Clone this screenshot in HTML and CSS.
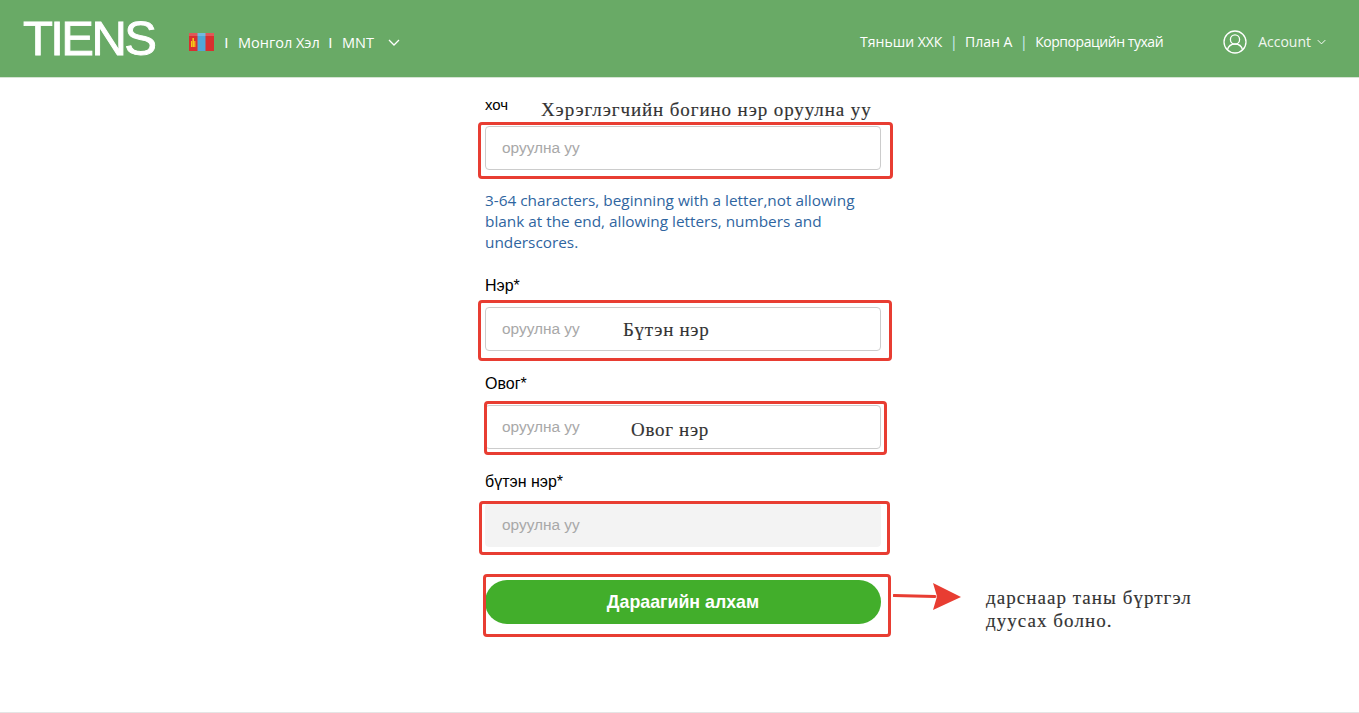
FILE: index.html
```html
<!DOCTYPE html>
<html lang="mn">
<head>
  <meta charset="UTF-8" />
  <meta name="viewport" content="width=device-width, initial-scale=1.0" />
  <title>TIENS</title>
  <link rel="stylesheet" href="styles.css">
</head>
<body>
  <header class="topbar">
    <div class="topbar-left">
      <a class="logo">TIENS</a>
      <svg class="flag" viewBox="0 0 25 18" aria-hidden="true">
        <rect width="25" height="18" fill="#d92f2f"/>
        <rect x="8.5" width="8" height="18" fill="#4fa8d8"/>
        <rect width="25" height="3" fill="#fff" opacity=".2"/>
        <rect x="2" y="8" width="1.2" height="6" fill="#f5c518"/>
        <rect x="5.2" y="8" width="1.2" height="6" fill="#f5c518"/>
        <rect x="3.400" y="5" width="1.6" height="9" fill="#f5c518"/>
      </svg>
      <div class="locale">
        <span class="bar">I</span>
        <span>Монгол Хэл</span>
        <span class="bar">I</span>
        <span>MNT</span>
        <svg class="chevron" viewBox="0 0 12 7" aria-hidden="true"><path d="M1 1l5 5 5-5"/></svg>
      </div>
    </div>
    <div class="topbar-right">
      <nav class="links">
        <a>Тяньши ХХК</a>
        <span class="pipe">|</span>
        <a>План А</a>
        <span class="pipe">|</span>
        <a class="tight">Корпорацийн тухай</a>
      </nav>
      <div class="account">
        <svg class="user" viewBox="0 0 24 24" aria-hidden="true">
          <circle cx="12" cy="12" r="11"/>
          <circle cx="12" cy="9.5" r="4.6"/>
          <path d="M4.4 20c1-4 4-6 7.6-6s6.600 2 7.600 6"/>
        </svg>
        <span>Account</span>
        <svg class="chevron small" viewBox="0 0 12 7" aria-hidden="true"><path d="M1 1l5 5 5-5"/></svg>
      </div>
    </div>
  </header>

  <main class="form">
    <label class="field-label first" for="nick">хоч</label>
    <input class="text-input" id="nick" type="text" placeholder="оруулна уу">
    <p class="hint">3-64 characters, beginning with a letter,not allowing blank at the end, allowing letters, numbers and underscores.</p>

    <label class="field-label after-hint" for="first">Нэр*</label>
    <input class="text-input" id="first" type="text" placeholder="оруулна уу">

    <label class="field-label" for="last">Овог*</label>
    <input class="text-input" id="last" type="text" placeholder="оруулна уу">

    <label class="field-label" for="full">бүтэн нэр*</label>
    <input class="text-input locked" id="full" type="text" placeholder="оруулна уу" disabled>

    <button class="next-btn" type="button">Дараагийн алхам</button>
  </main>

  <footer class="footer-line"></footer>

  <!-- annotations drawn over the page -->
  <div class="mark mark-nick"></div>
  <div class="mark mark-first"></div>
  <div class="mark mark-last"></div>
  <div class="mark mark-full"></div>
  <div class="mark mark-btn"></div>

  <span class="note note-nick">Хэрэглэгчийн богино нэр оруулна уу</span>
  <span class="note note-first">Бүтэн нэр</span>
  <span class="note note-last">Овог нэр</span>
  <span class="note note-done">дарснаар таны бүртгэл<br>дуусах болно.</span>

  <svg class="arrow" viewBox="0 0 70 30" aria-hidden="true">
    <path d="M1 13.500L42 14.500" stroke="#e83d32" stroke-width="3" stroke-linecap="round"/>
    <path d="M40 1L68 15L40 28L44 14.500Z" fill="#e83d32"/>
  </svg>
</body>
</html>
```

FILE: styles.css
```css
* {
  margin: 0;
  padding: 0;
  box-sizing: border-box;
}

html, body {
  height: 713px;
  overflow: hidden;
}

body {
  position: relative;
  background: #fff;
  font-family: "Liberation Sans", sans-serif;
  color: #000;
}

.topbar {
  display: flex;
  justify-content: space-between;
  align-items: center;
  height: 78px;
  padding: 0 33px 0 23px;
  background: #69aa66;
  border-bottom: 1px solid #d5e4d3;
  color: #fff;
  font-family: "Open Sans", sans-serif;
  font-size: 14px;
}

.topbar-left, .topbar-right, .locale, .links, .account {
  display: flex;
  align-items: center;
}

.topbar-right {
  margin-top: 6px;
}

.logo {
  font-family: "Liberation Sans", sans-serif;
  font-size: 49px;
  line-height: 49px;
  letter-spacing: -2.6px;
  -webkit-text-stroke: 0.9px #fff;
}

.flag {
  width: 25px;
  height: 18px;
  margin-left: 35px;
  margin-top: 7px;
  filter: blur(0.4px);
}

.locale {
  margin-left: 10px;
  margin-top: 7px;
  gap: 8.5px;
  font-size: 14.5px;
}

.bar {
  color: #fff;
  padding-right: 1px;
  font-family: "Liberation Sans", sans-serif;
  font-size: 15px;
}

.chevron {
  width: 12px;
  height: 7px;
  margin-left: 6px;
  fill: none;
  stroke: #fff;
  stroke-width: 1.3;
}

.chevron.small {
  width: 9px;
  height: 6px;
  margin-left: 6px;
}

.links {
  gap: 7.5px;
}

.tight {
  letter-spacing: -0.45px;
}

.pipe {
  color: #cfeffa;
}

.account {
  margin-left: 60px;
  gap: 11px;
  color: #f0f6ef;
}

.account .chevron {
  margin-left: -5px;
}

.user {
  width: 24px;
  height: 24px;
  fill: none;
  stroke: #fff;
  stroke-width: 1.300;
}

.form {
  display: flex;
  flex-direction: column;
  width: 396px;
  margin-left: 485px;
}

.field-label {
  display: block;
  font-size: 16px;
  line-height: 16px;
  margin-top: 25px;
  margin-bottom: 13px;
}

.field-label.first {
  font-size: 15px;
  margin-top: 19px;
}

.field-label.after-hint {
  margin-top: 0;
}

.text-input {
  display: block;
  width: 396px;
  height: 44px;
  padding: 0 16px;
  border: 1px solid #ccc;
  border-radius: 4px;
  background: #fff;
  font-family: "Liberation Sans", sans-serif;
  font-size: 15.400px;
}

.text-input::placeholder {
  color: #a8a8a8;
  opacity: 1;
}

.text-input.locked {
  background: #f3f3f3;
  border-color: #f3f3f3;
}

.hint {
  margin: 20px 0 25px;
  max-width: 380px;
  font-family: "Open Sans", sans-serif;
  font-size: 15.35px;
  line-height: 21px;
  color: #2f659f;
}

.next-btn {
  height: 44px;
  margin-top: 33px;
  border: 0;
  border-radius: 22px;
  background: #42ae2b;
  color: #fff;
  font-family: "Liberation Sans", sans-serif;
  font-size: 17.8px;
  font-weight: 700;
}

.footer-line {
  position: absolute;
  left: 0;
  right: 0;
  top: 712px;
  height: 1px;
  background: #e5e5e5;
}

.mark {
  position: absolute;
  border: 3px solid #e83d32;
  border-radius: 4px;
}

.mark-nick { left: 478px; top: 122px; width: 415px; height: 57px; }
.mark-first { left: 478px; top: 300px; width: 414px; height: 61px; }
.mark-last { left: 484px; top: 401px; width: 403px; height: 54px; }
.mark-full { left: 479px; top: 501px; width: 411px; height: 54px; }
.mark-btn { left: 483px; top: 574px; width: 408px; height: 63px; }

.note {
  position: absolute;
  font-family: "Liberation Serif", serif;
  font-size: 19px;
  line-height: 22px;
  letter-spacing: 0.9px;
  color: #333;
  white-space: nowrap;
  -webkit-text-stroke: 0.15px #333;
}

.note-nick { left: 541px; top: 99px; }
.note-first { left: 623px; top: 319px; letter-spacing: 0.7px; }
.note-last { left: 631px; top: 419px; letter-spacing: 0.7px; }
.note-done { left: 986px; top: 586px; line-height: 23px; letter-spacing: 1.05px; }

.arrow {
  position: absolute;
  left: 893px;
  top: 582px;
  width: 70px;
  height: 30px;
}
```
